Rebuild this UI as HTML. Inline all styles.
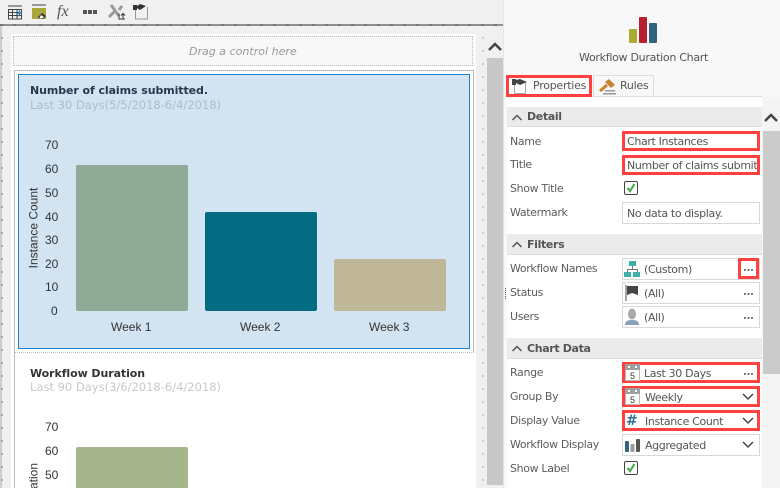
<!DOCTYPE html>
<html><head><meta charset="utf-8">
<style>
html,body{margin:0;padding:0;width:780px;height:488px;overflow:hidden}
#w{position:relative;width:780px;height:488px;overflow:hidden;background:#f0f0f0;font-family:"Liberation Sans","DejaVu Sans",sans-serif;}
.a{position:absolute}
.t{position:absolute;white-space:nowrap;font-family:"DejaVu Sans","Liberation Sans",sans-serif;font-size:11px;line-height:14px;color:#555;letter-spacing:-.35px;margin-top:1px}
.lab{left:510px;color:#5c5c5c}
.c{position:absolute;white-space:nowrap;font-family:"Liberation Sans",sans-serif;font-size:12px;color:#333;line-height:14px}
.box{position:absolute;left:622px;height:20px;background:#fff;border:1px solid #d8d8d8;box-sizing:border-box;width:138px}
.red{border:3px solid #ff4040;}
.sec{position:absolute;left:507px;width:255px;height:20px;background:#ebebeb;border-bottom:1px solid #ddd;box-sizing:border-box}
.sect{position:absolute;left:527px;font:bold 11px/14px "DejaVu Sans",sans-serif;letter-spacing:-.35px;color:#555;margin-top:1px}
.dots{position:absolute;left:744px;width:9px;height:2px;background:repeating-linear-gradient(90deg,#777 0 2px,transparent 2px 3.500px)}
.bar{position:absolute;border-radius:2px}
</style></head><body><div id="w">

<!-- toolbar -->
<div class="a" style="left:0;top:24px;width:503px;height:2px;background:#8f8f8f"></div>
<div class="a" style="left:0;top:24px;width:503px;height:2px;background:repeating-linear-gradient(90deg,#777 0 3px,transparent 3px 13px)"></div>
<svg class="a" style="left:0;top:0" width="160" height="24">
<rect x="8" y="5" width="14" height="2" fill="#999"/>
<path d="M8.500 9.500h13v9.500h-13zM8.500 12.500h13M8.500 15.500h13M12.500 9.500v9.500M17 9.500v9.500" fill="none" stroke="#444"/>
<path d="M20 9l-3 5h2l-2 4 5-6h-2z" fill="#2a88c8"/>
<rect x="32" y="4" width="14" height="2" fill="#999"/>
<rect x="32" y="8" width="14" height="11" fill="#a8a838"/>
<path d="M38 17l4-4 4 3-3 3h-4z" fill="#333"/><path d="M41 15l3 2-2 1.500h-3z" fill="#fff"/>
<rect x="83" y="10" width="4" height="4" fill="#555"/><rect x="88" y="10" width="4" height="4" fill="#555"/><rect x="93" y="10" width="4" height="4" fill="#555"/>
<path d="M111 5l8 11M122 6l-3 4M109 17l6-6" stroke="#999" stroke-width="3" fill="none"/>
<path d="M119 13.500v5.500h6M123 19v-5M121 15.500l2-2 2 2" stroke="#333" fill="none"/>
<path d="M135.500 9.500v9.500h12v-12" stroke="#999" fill="none"/>
<path d="M133 5h4v1l3-2 6 2-6 4-3-2v2h-4z" fill="#333"/>
</svg>
<div class="a" style="left:57px;top:3px;font:italic 16px 'Liberation Serif',serif;color:#555">fx</div>

<!-- rulers -->
<div class="a" style="left:0;top:26px;width:2px;height:462px;background:#ccc"></div>
<div class="a" style="left:1px;top:37px;width:2px;height:451px;background:repeating-linear-gradient(#aaa 0 2px,transparent 2px 13px)"></div>
<div class="a" style="left:482px;top:37px;width:2px;height:451px;background:repeating-linear-gradient(#ccc 0 2px,transparent 2px 13px)"></div>
<!-- canvas -->
<div class="a" style="left:11px;top:34px;width:465px;height:454px;background:#fff"></div>
<div class="a" style="left:13px;top:36px;width:460px;height:30px;background:#f8f8f8;border:1px dotted #bbb;box-sizing:border-box"></div>
<div class="t" style="left:189px;top:44px;font-style:italic;color:#999;font-size:11px;letter-spacing:.02px">Drag a control here</div>

<div class="a" style="left:14px;top:70px;width:460px;height:283px;border:1px solid #bbb;border-bottom:1px dotted #bbb;box-sizing:border-box"></div>
<div class="a" style="left:14px;top:70px;width:1px;height:418px;background:#bbb"></div>
<div class="a" style="left:18px;top:74px;width:452px;height:275px;background:#d2e3f2;border:1px solid #1b82d0;box-sizing:border-box"></div>

<div class="t" style="left:30px;top:83px;font:bold 11px/14px 'DejaVu Sans',sans-serif;color:#25394f;letter-spacing:-.08px">Number of claims submitted.</div>
<div class="t" style="left:30px;top:97px;font-size:11.500px;color:#a9bccd;letter-spacing:0">Last 30 Days(5/5/2018-6/4/2018)</div>

<div class="c" style="left:45px;top:138px">70</div>
<div class="c" style="left:45px;top:162px">60</div>
<div class="c" style="left:45px;top:186px">50</div>
<div class="c" style="left:45px;top:210px">40</div>
<div class="c" style="left:45px;top:233px">30</div>
<div class="c" style="left:45px;top:257px">20</div>
<div class="c" style="left:45px;top:280px">10</div>
<div class="c" style="left:51px;top:304px">0</div>
<svg class="a" style="left:20px;top:180px" width="24" height="95"><text transform="translate(17.500,48) rotate(-90)" text-anchor="middle" font-family="Liberation Sans" font-size="12" fill="#333">Instance Count</text></svg>
<div class="bar" style="left:76px;top:165px;width:112px;height:146px;background:#8fab97"></div>
<div class="bar" style="left:205px;top:212px;width:112px;height:99px;background:#036b82"></div>
<div class="bar" style="left:334px;top:259px;width:112px;height:52px;background:#bfb798"></div>
<div class="c" style="left:111px;top:320px">Week 1</div>
<div class="c" style="left:240px;top:320px">Week 2</div>
<div class="c" style="left:369px;top:320px">Week 3</div>

<div class="t" style="left:30px;top:366px;font:bold 11px/14px 'DejaVu Sans',sans-serif;color:#333;letter-spacing:-.08px">Workflow Duration</div>
<div class="t" style="left:30px;top:379px;font-size:11.500px;color:#c8c8c8;letter-spacing:0">Last 90 Days(3/6/2018-6/4/2018)</div>
<div class="c" style="left:45px;top:420px">70</div>
<div class="c" style="left:45px;top:444px">60</div>
<div class="c" style="left:45px;top:468px">50</div>
<svg class="a" style="left:20px;top:460px" width="24" height="28"><text transform="translate(17.500,3) rotate(-90)" text-anchor="end" font-family="Liberation Sans" font-size="12" fill="#333">ation</text></svg>
<div class="bar" style="left:76px;top:447px;width:112px;height:41px;background:#a6b58b;border-radius:2px 2px 0 0"></div>

<!-- left scrollbar -->
<svg class="a" style="left:487px;top:40px" width="16" height="12"><path d="M2 10l6-6 6 6" fill="none" stroke="#444" stroke-width="2.500"/></svg>
<div class="a" style="left:487px;top:58px;width:16px;height:427px;background:#c8c8c8"></div>

<!-- right panel -->
<div class="a" style="left:503px;top:0;width:277px;height:488px;background:#f8f8f8;border-left:1px solid #e6e6e6;box-sizing:border-box"></div>
<svg class="a" style="left:629px;top:17px" width="30" height="27">
<rect x="0" y="12" width="8" height="14" rx="1" fill="#a9ac2d"/>
<rect x="10" y="0" width="8" height="26" rx="1" fill="#b51f2e"/>
<rect x="20" y="6" width="8" height="20" rx="1" fill="#33647f"/>
</svg>
<div class="t" style="left:579px;top:50px;font-size:11px;color:#555;letter-spacing:-.28px">Workflow Duration Chart</div>

<!-- tabs -->
<div class="a" style="left:507px;top:97px;width:255px;height:391px;background:#fff"></div>
<div class="a" style="left:507px;top:96px;width:255px;height:1px;background:#ddd"></div>
<div class="a" style="left:506px;top:75px;width:86px;height:22px;border:3px solid #ff4040;box-sizing:border-box;background:#fdfdfd"></div>
<svg class="a" style="left:511px;top:78px" width="18" height="16"><path d="M3.500 5v10.500h11v-11" stroke="#aaa" fill="none"/><path d="M1 1h4v1l4-1 7 3-7 3-4-2v2H1z" fill="#444"/></svg>
<div class="t" style="left:533px;top:78px;letter-spacing:-.25px">Properties</div>
<div class="a" style="left:593px;top:75px;width:61px;height:22px;border:1px solid #ddd;border-bottom:0;box-sizing:border-box"></div>
<svg class="a" style="left:599px;top:78px" width="18" height="18"><path d="M1 13l7-6" stroke="#c9822f" stroke-width="3"/><path d="M6 4l4-3 6 6-4 3z" fill="#c9822f"/><rect x="6" y="12" width="10" height="1.500" fill="#999"/><rect x="4" y="15" width="13" height="1.500" fill="#999"/></svg>
<div class="t" style="left:620px;top:78px;letter-spacing:-.25px">Rules</div>

<!-- right scrollbar -->
<div class="a" style="left:762px;top:97px;width:18px;height:391px;background:#f4f4f4"></div>
<svg class="a" style="left:763px;top:111px" width="16" height="12"><path d="M2 10l6-6 6 6" fill="none" stroke="#444" stroke-width="2.500"/></svg>
<div class="a" style="left:763px;top:131px;width:17px;height:243px;background:#cbcbcb"></div>

<!-- Detail -->
<div class="sec" style="top:107px"></div>
<svg class="a" style="left:511px;top:112px" width="12" height="10"><path d="M1.500 8l4.500-4.500 4.500 4.500" fill="none" stroke="#555" stroke-width="1.500"/></svg>
<div class="sect" style="top:109px">Detail</div>

<div class="t lab" style="top:134px">Name</div>
<div class="box red" style="top:131px;height:20px"></div>
<div class="t" style="left:627px;top:134px">Chart Instances</div>
<div class="t lab" style="top:157px">Title</div>
<div class="box red" style="top:155px;height:20px"></div>
<div class="t" style="left:627px;top:158px;width:130px;overflow:hidden">Number of claims submit</div>
<div class="t lab" style="top:181px">Show Title</div>
<div class="a" style="left:624px;top:181px;width:14px;height:14px;border:1px solid #444;border-radius:2px;background:#fff;box-sizing:border-box"></div>
<svg class="a" style="left:625px;top:182px" width="12" height="12"><path d="M2.500 6l2.500 3 4.500-7" fill="none" stroke="#4bb04f" stroke-width="2.200"/></svg>
<div class="t lab" style="top:205px">Watermark</div>
<div class="box" style="top:202px;height:22px"></div>
<div class="t" style="left:627px;top:206px">No data to display.</div>

<!-- Filters -->
<div class="sec" style="top:234px;height:21px"></div>
<svg class="a" style="left:511px;top:239px" width="12" height="10"><path d="M1.500 8l4.500-4.500 4.500 4.500" fill="none" stroke="#555" stroke-width="1.500"/></svg>
<div class="sect" style="top:237px">Filters</div>

<div class="t lab" style="top:261px">Workflow Names</div>
<div class="box" style="top:258px;height:22px"></div>
<svg class="a" style="left:624px;top:260px" width="16" height="18"><rect x="5" y="1" width="7" height="5" fill="#3fb0a8"/><path d="M8.500 6v3M3.500 12V9.500h10V12" stroke="#777" fill="none"/><rect x="0" y="12" width="7" height="5" fill="#3fb0a8"/><rect x="9" y="12" width="7" height="5" fill="#3fb0a8"/></svg>
<div class="t" style="left:644px;top:262px">(Custom)</div>
<div class="a" style="left:738px;top:258px;width:21px;height:21px;border:3px solid #ff4040;box-sizing:border-box;background:#fff"></div>
<div class="dots" style="top:269px"></div>

<div class="t lab" style="top:285px">Status</div>
<div class="box" style="top:282px;height:22px"></div>
<svg class="a" style="left:625px;top:285px" width="14" height="17"><path d="M1 0v16" stroke="#444"/><path d="M2 1h11v9l-6-2-5 2z" fill="#444"/></svg>
<div class="t" style="left:644px;top:286px">(All)</div>
<div class="dots" style="top:293px"></div>

<div class="t lab" style="top:309px">Users</div>
<div class="box" style="top:306px;height:22px"></div>
<svg class="a" style="left:624px;top:308px" width="16" height="18"><ellipse cx="8" cy="6" rx="4" ry="5.500" fill="#aaa"/><path d="M1 17c0-4 3-5 7-5s7 1 7 5z" fill="#8ca0c0"/></svg>
<div class="t" style="left:644px;top:310px">(All)</div>
<div class="dots" style="top:317px"></div>
<div class="a" style="left:505px;top:288px;width:1px;height:12px;background:repeating-linear-gradient(#555 0 1px,transparent 1px 2px)"></div>

<!-- Chart Data -->
<div class="sec" style="top:338px;height:21px"></div>
<svg class="a" style="left:511px;top:343px" width="12" height="10"><path d="M1.500 8l4.500-4.500 4.500 4.500" fill="none" stroke="#555" stroke-width="1.500"/></svg>
<div class="sect" style="top:341px">Chart Data</div>

<div class="t lab" style="top:365px">Range</div>
<div class="box red" style="top:362px;height:21px"></div>
<svg class="a" style="left:625px;top:364px" width="15" height="17"><rect x="0.500" y="0.500" width="14" height="16" fill="#fff" stroke="#bbb"/><rect x="0" y="0" width="15" height="6" fill="#a0a0a0"/><rect x="3" y="2" width="2" height="2" fill="#fff"/><rect x="10" y="2" width="2" height="2" fill="#fff"/><text x="5" y="15" font-size="9" font-family="Liberation Sans" fill="#333">5</text></svg>
<div class="t" style="left:644px;top:366px">Last 30 Days</div>
<div class="dots" style="top:373px"></div>

<div class="t lab" style="top:389px">Group By</div>
<div class="box red" style="top:386px;height:21px"></div>
<svg class="a" style="left:625px;top:388px" width="15" height="17"><rect x="0.500" y="0.500" width="14" height="16" fill="#fff" stroke="#bbb"/><rect x="0" y="0" width="15" height="6" fill="#a0a0a0"/><rect x="3" y="2" width="2" height="2" fill="#fff"/><rect x="10" y="2" width="2" height="2" fill="#fff"/><text x="5" y="15" font-size="9" font-family="Liberation Sans" fill="#333">5</text></svg>
<div class="t" style="left:645px;top:390px">Weekly</div>
<svg class="a" style="left:741px;top:392px" width="14" height="9"><path d="M2 2l5 5 5-5" fill="none" stroke="#444" stroke-width="1.500"/></svg>

<div class="t lab" style="top:413px">Display Value</div>
<div class="box red" style="top:410px;height:21px"></div>
<div class="a" style="left:626px;top:413px;font:bold 14px/16px 'DejaVu Sans',sans-serif;color:#2f6f92">#</div>
<div class="t" style="left:645px;top:414px">Instance Count</div>
<svg class="a" style="left:741px;top:416px" width="14" height="9"><path d="M2 2l5 5 5-5" fill="none" stroke="#444" stroke-width="1.500"/></svg>

<div class="t lab" style="top:437px">Workflow Display</div>
<div class="box" style="top:434px;height:22px"></div>
<svg class="a" style="left:625px;top:439px" width="15" height="13"><rect x="0" y="2" width="4" height="11" rx="1" fill="#33647f"/><rect x="5.500" y="5" width="4" height="8" rx="1" fill="#999"/><rect x="11" y="0" width="4" height="13" rx="1" fill="#555"/></svg>
<div class="t" style="left:645px;top:438px">Aggregated</div>
<svg class="a" style="left:741px;top:440px" width="14" height="9"><path d="M2 2l5 5 5-5" fill="none" stroke="#444" stroke-width="1.500"/></svg>

<div class="t lab" style="top:461px">Show Label</div>
<div class="a" style="left:624px;top:461px;width:14px;height:14px;border:1px solid #444;border-radius:2px;background:#fff;box-sizing:border-box"></div>
<svg class="a" style="left:625px;top:462px" width="12" height="12"><path d="M2.500 6l2.500 3 4.500-7" fill="none" stroke="#4bb04f" stroke-width="2.200"/></svg>

</div></body></html>
